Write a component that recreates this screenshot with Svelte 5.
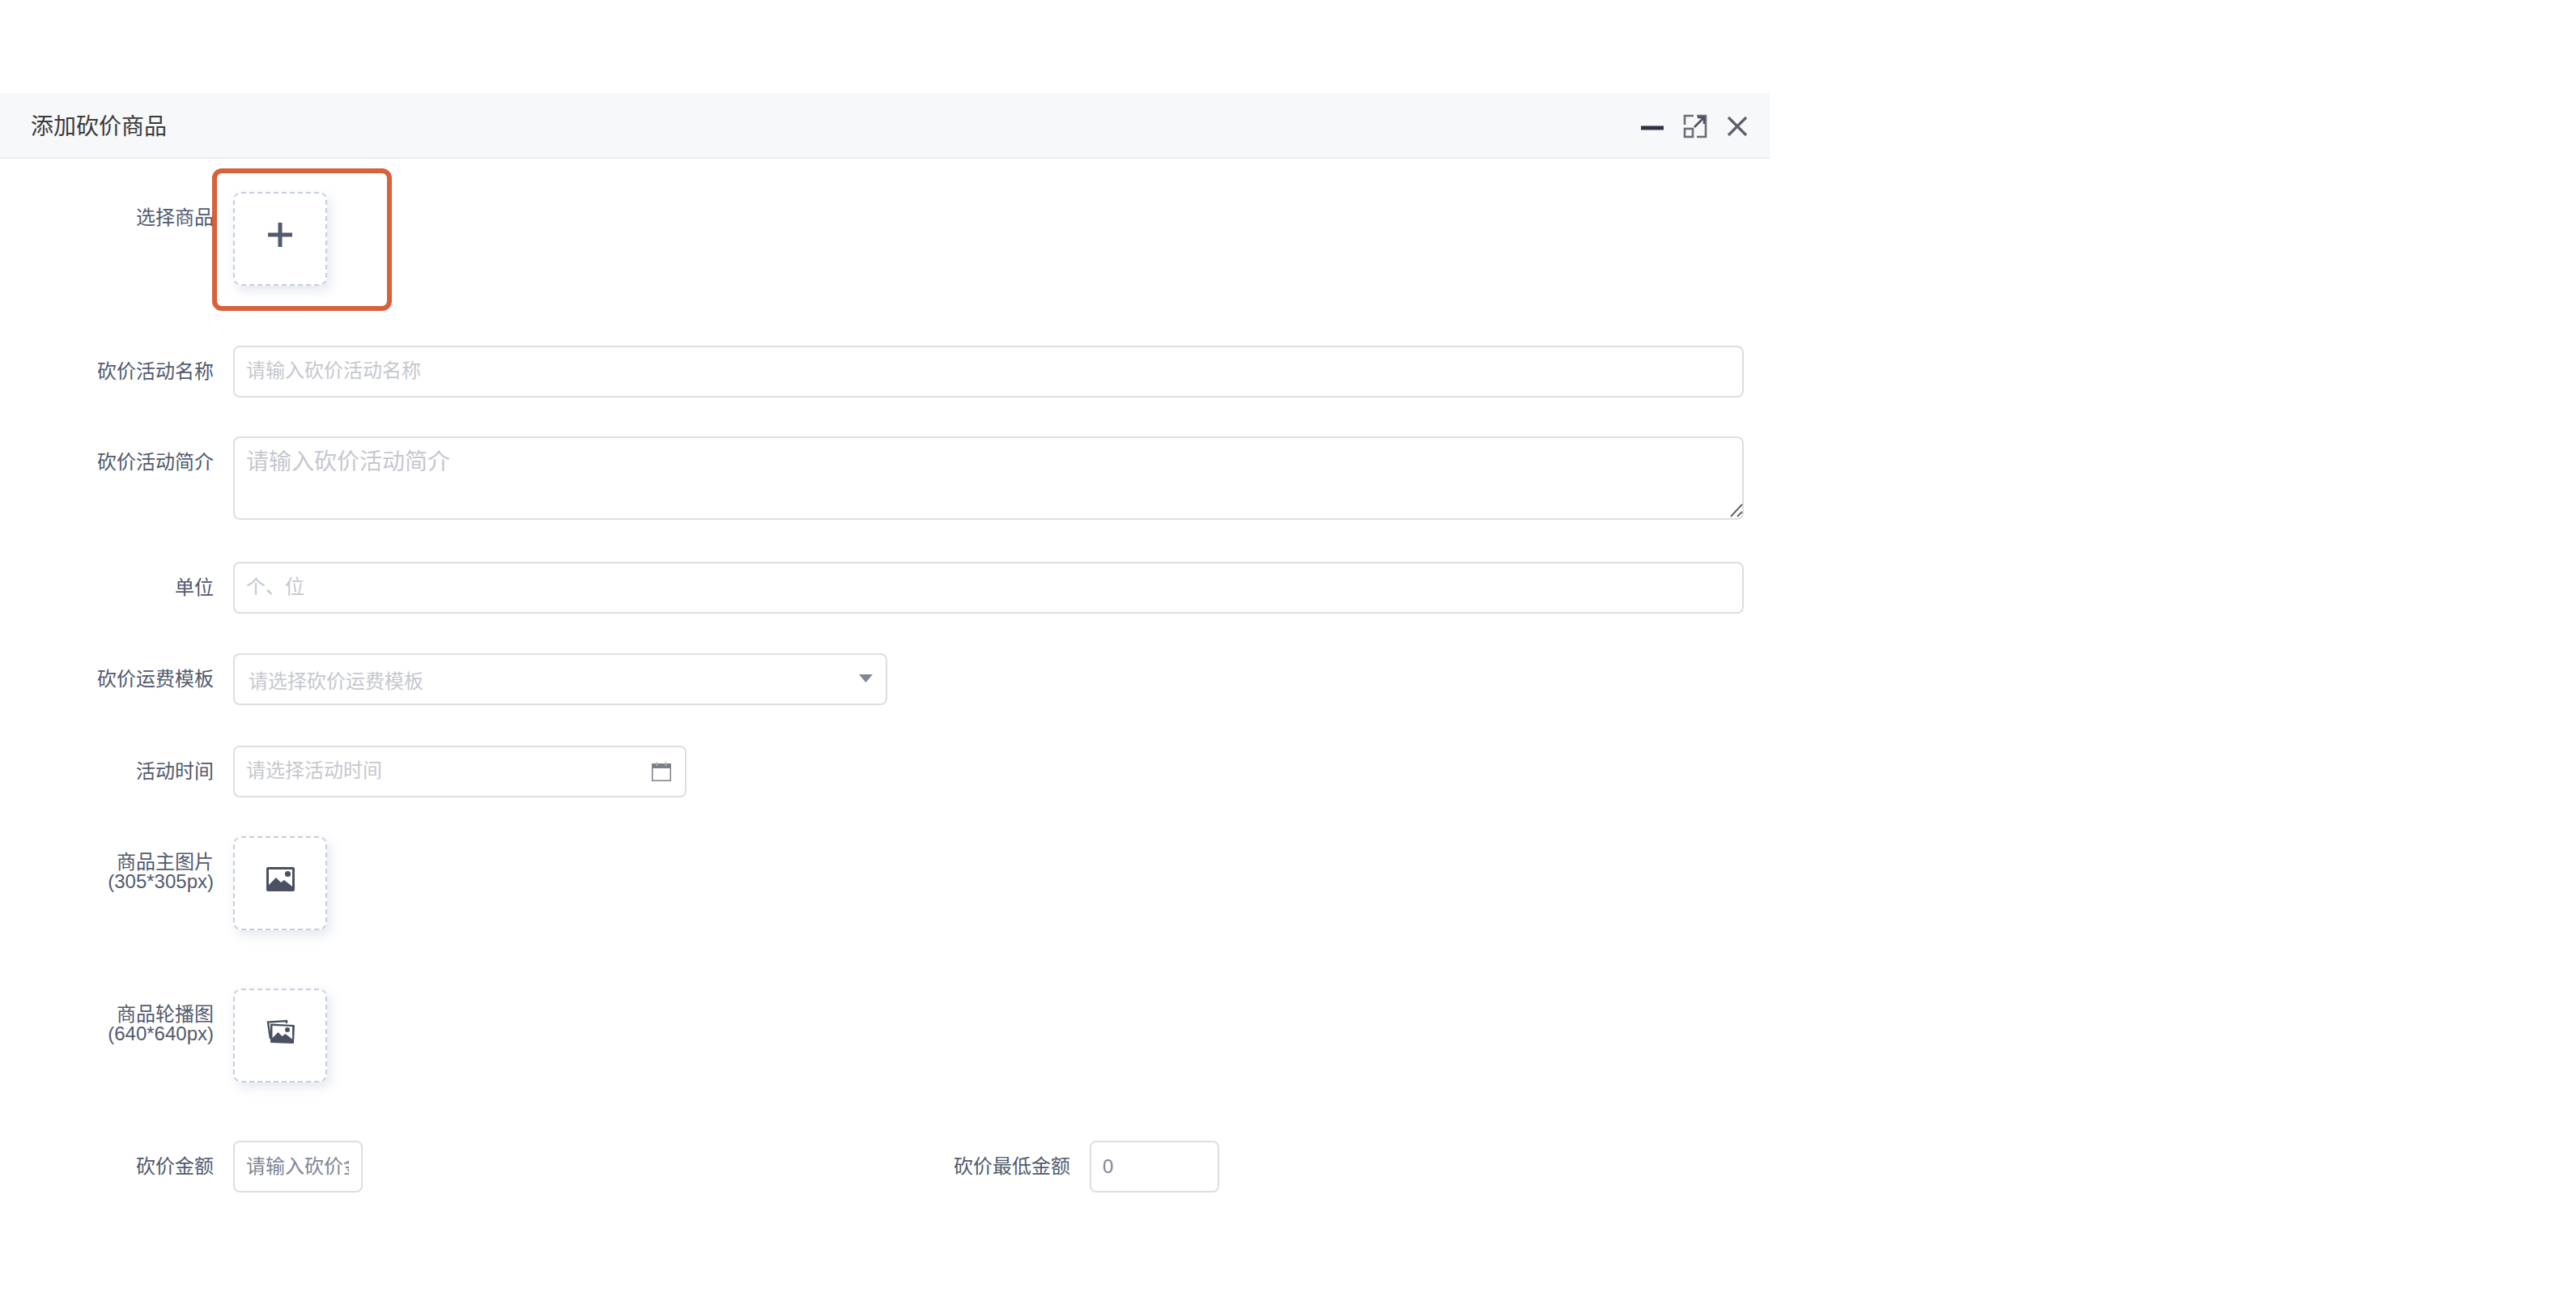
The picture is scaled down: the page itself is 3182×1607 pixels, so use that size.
<script>
  const textRows = [
    { label: '砍价活动名称', placeholder: '请输入砍价活动名称' }
  ];
</script>

<div class="modal">
  <header class="head">
    <span class="title">添加砍价商品</span>
    <div class="tools">
      <svg class="min" width="28" height="6" viewBox="0 0 28 6"><rect y="0.5" width="28" height="5" fill="#2f3145"/></svg>
      <svg class="max" width="30" height="30" viewBox="0 0 30 30" fill="none" stroke="#6b6e78" stroke-width="2.6">
        <path d="M13 2H2v11M17 2h11v26H17"/>
        <rect x="2" y="18" width="10" height="10"/>
        <path d="M14 16 26 4M18 4h8v8" stroke="#4b4e5c"/>
      </svg>
      <svg class="close" width="26" height="26" viewBox="0 0 26 26" stroke="#5d606c" stroke-width="3.2" fill="none"><path d="M2 2l22 22M24 2 2 24"/></svg>
    </div>
  </header>

  <form class="form">
    <div class="row up-row first-up">
      <div class="label">选择商品</div>
      <div class="upload marked">
        <svg width="30" height="30" viewBox="0 0 30 30" fill="#515a6e"><rect x="12.500" width="5" height="30"/><rect y="12.500" width="30" height="5"/></svg>
        <span class="mark"></span>
      </div>
    </div>

    {#each textRows as r}
      <div class="row tight">
        <div class="label">{r.label}</div>
        <input class="field grow" placeholder={r.placeholder} />
      </div>
    {/each}

    <div class="row area-row">
      <div class="label">砍价活动简介</div>
      <div class="area-wrap grow">
        <textarea class="field area" placeholder="请输入砍价活动简介"></textarea>
        <svg class="resizer" width="16" height="17" viewBox="0 0 16 17" stroke="#666" stroke-width="2" fill="none"><path d="M1 16 15 1M9 16l6-6"/></svg>
      </div>
    </div>

    <div class="row">
      <div class="label">单位</div>
      <input class="field grow" placeholder="个、位" />
    </div>

    <div class="row loose">
      <div class="label">砍价运费模板</div>
      <div class="field select">
        <span>请选择砍价运费模板</span>
        <svg width="17" height="10" viewBox="0 0 17 10"><path d="M0 0h17l-8.500 10z" fill="#808695"/></svg>
      </div>
    </div>

    <div class="row tight">
      <div class="label">活动时间</div>
      <div class="date">
        <input class="field date-input" placeholder="请选择活动时间" />
        <svg class="cal" width="24" height="24" viewBox="0 0 24 24">
          <rect x="0.750" y="2.750" width="22.500" height="20.500" fill="#fff" stroke="#7c7f8a" stroke-width="1.500"/>
          <rect y="2" width="24" height="6" fill="#7c7f8a"/>
          <path d="M6.500 0v5M17.500 0v5" stroke="#b9bbc2" stroke-width="1.500"/>
        </svg>
      </div>
    </div>

    <div class="row up-row">
      <div class="label">商品主图片<br />(305*305px)</div>
      <div class="upload">
        <svg width="35" height="30" viewBox="0 0 35 30">
          <path fill="#4b5163" fill-rule="evenodd" d="M2 0h31a2 2 0 0 1 2 2v26a2 2 0 0 1-2 2H2a2 2 0 0 1-2-2V2a2 2 0 0 1 2-2zm1 3v19l9-9 6 6 4-3 10 8V3z"/>
          <circle cx="26.500" cy="8.500" r="3.600" fill="#4b5163"/>
        </svg>
      </div>
    </div>

    <div class="row up-row">
      <div class="label">商品轮播图<br />(640*640px)</div>
      <div class="upload">
        <svg width="35" height="30" viewBox="0 0 35 30">
          <path fill="none" stroke="#4b5163" stroke-width="2.400" d="M25 5V2L2 3.500 5 24"/>
          <path fill="#4b5163" fill-rule="evenodd" d="M6 5.500l28 1.500a1 1 0 0 1 1 1L34 29a1 1 0 0 1-1 1L6 29a1 1 0 0 1-1-1L5 6.500a1 1 0 0 1 1-1zm1.500 2.500L7.500 23l7-7 5 5 4-3 8.500 6.500L32 9z"/>
          <circle cx="26" cy="13" r="3" fill="#4b5163"/>
        </svg>
      </div>
    </div>

    <div class="row last">
      <div class="col">
        <div class="label">砍价金额</div>
        <input class="field small" placeholder="请输入砍价金额" />
      </div>
      <div class="col">
        <div class="label">砍价最低金额</div>
        <input class="field small" value="0" />
      </div>
    </div>
  </form>
</div>

<style>
  :global(body) {
    margin: 0;
    background: #fff;
  }
  .modal {
    width: 2186px;
    padding-top: 115px;
    font-family: "Liberation Sans", "Noto Sans CJK SC", sans-serif;
    color: #515a6e;
  }
  .head {
    height: 79px;
    background: #f7f8fa;
    border-bottom: 2px solid #e8eaec;
    display: flex;
    align-items: center;
    justify-content: space-between;
    padding: 0 27px 0 38px;
  }
  .title {
    font-size: 28px;
    color: #3a3a3a;
    margin-bottom: 2px;
  }
  .tools {
    display: flex;
    align-items: center;
    gap: 24px;
    padding-top: 2px;
  }
  .min {
    margin-top: 5px;
  }
  .form {
    padding: 41px 32px 0 0;
  }
  .row {
    display: flex;
    align-items: flex-start;
    margin-bottom: 49px;
  }
  .tight {
    margin-bottom: 48px;
  }
  .loose {
    margin-bottom: 50px;
  }
  .area-row {
    margin-bottom: 52px;
  }
  .up-row {
    margin-bottom: 72px;
  }
  .first-up {
    margin-bottom: 74px;
  }
  .label {
    width: 264px;
    flex: none;
    box-sizing: border-box;
    padding-top: 20px;
    margin-right: 24px;
    text-align: right;
    font-size: 24px;
    line-height: 24px;
  }
  .upload {
    position: relative;
    width: 116px;
    height: 116px;
    box-sizing: border-box;
    border: 2px dashed #c5cfe0;
    border-radius: 10px;
    box-shadow: 4px 6px 14px rgba(90, 105, 135, 0.16);
    background: #fff;
    display: flex;
    align-items: center;
    justify-content: center;
    padding-bottom: 10px;
  }
  .mark {
    position: absolute;
    left: -28px;
    top: -31px;
    width: 222px;
    height: 176px;
    box-sizing: border-box;
    border: 6px solid #d8603a;
    border-radius: 12px;
  }
  .field {
    box-sizing: border-box;
    height: 64px;
    border: 2px solid #dcdee2;
    border-radius: 8px;
    padding: 0 15px 2px 14px;
    font: inherit;
    font-size: 24px;
    color: #515a6e;
    background: #fff;
    outline: none;
  }
  .field::placeholder {
    color: #c5c8ce;
    opacity: 1;
  }
  .grow {
    flex: 1;
    min-width: 0;
  }
  .area-wrap {
    position: relative;
  }
  .area {
    width: 100%;
    height: 103px;
    padding: 9px 15px 8px 14px;
    font-size: 28px;
    line-height: 1.5;
    resize: none;
    display: block;
  }
  .resizer {
    position: absolute;
    right: 1px;
    bottom: 3px;
  }
  .select {
    width: 808px;
    display: flex;
    align-items: center;
    justify-content: space-between;
    padding: 0 16px 0 17px;
    color: #c5c8ce;
  }
  .select svg {
    margin-bottom: 2px;
  }
  .date {
    position: relative;
    width: 560px;
  }
  .date-input {
    width: 100%;
    display: block;
  }
  .cal {
    position: absolute;
    right: 19px;
    top: 20px;
  }
  .last {
    margin-bottom: 0;
  }
  .col {
    display: flex;
    align-items: flex-start;
    width: 1058px;
  }
  .small {
    width: 160px;
    padding-bottom: 0;
    color: #808695;
  }
  .small::placeholder {
    color: #808695;
  }
</style>
